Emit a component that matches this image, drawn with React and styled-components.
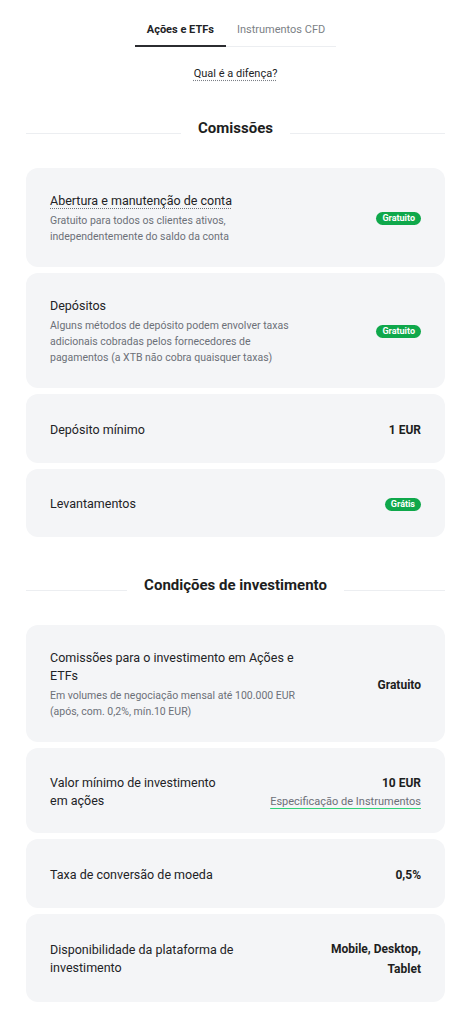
import React from "react";
import styled, { createGlobalStyle } from "styled-components";

const Global = createGlobalStyle`
  html, body { margin: 0; padding: 0; background: #ffffff; }
  body { font-family: Roboto, "Noto Sans", "Liberation Sans", sans-serif; color: #222326; -webkit-font-smoothing: antialiased; }
  * { box-sizing: border-box; }
`;

const Page = styled.div`
  padding: 14px 20px 20px 26px;
  display: flex;
  flex-direction: column;
  align-items: stretch;
`;

const Tabs = styled.div`
  display: flex;
  justify-content: center;
`;

const Tab = styled.div`
  padding: 9px ${(p) => (p.$active ? "12px" : "11px")} 8px;
  font-size: 11px;
  line-height: 14px;
  font-weight: ${(p) => (p.$active ? 700 : 400)};
  color: ${(p) => (p.$active ? "#222326" : "#7b7f86")};
  border-bottom: ${(p) => (p.$active ? "2px solid #2b2c30" : "1px solid #eceef1")};
  padding-bottom: ${(p) => (p.$active ? "8px" : "9px")};
  align-self: flex-end;
`;

const Diff = styled.div`
  margin-top: 20px;
  text-align: center;
  font-size: 11px;
  line-height: 14px;
  color: #222326;
`;

const Dotted = styled.span`
  text-decoration: underline dotted #7b7f86;
  text-underline-offset: 3px;
`;

const SectionTitle = styled.div`
  display: flex;
  align-items: center;
  gap: 17px;
  margin-top: ${(p) => p.$top}px;
  margin-bottom: 31px;
  font-size: 15px;
  line-height: 18px;
  font-weight: 700;
  color: #1d1e21;
  white-space: nowrap;
  &::before, &::after {
    content: "";
    flex: 1;
    height: 1px;
    background: #eceef1;
    margin-top: 10px;
  }
`;

const List = styled.div`
  display: flex;
  flex-direction: column;
  gap: 6px;
`;

const Card = styled.div`
  background: #f4f5f7;
  border-radius: 12px;
  padding: 24px 24px 22px;
  min-height: ${(p) => p.$min || 0}px;
  display: flex;
  align-items: center;
  justify-content: space-between;
  gap: 24px;
`;

const Left = styled.div`
  max-width: ${(p) => p.$max || 255}px;
  display: flex;
  flex-direction: column;
`;

const Title = styled.div`
  font-size: 12.5px;
  line-height: 18px;
  color: #222326;
`;

const DottedTitle = styled.span`
  text-decoration: underline dotted #6f737a;
  text-underline-offset: 3px;
  text-decoration-thickness: 1px;
`;

const Sub = styled.div`
  margin-top: 3px;
  font-size: 10.5px;
  line-height: 16px;
  color: #6c7077;
`;

const Right = styled.div`
  display: flex;
  flex-direction: column;
  align-items: flex-end;
  text-align: right;
  flex-shrink: 0;
  max-width: ${(p) => p.$max || 200}px;
`;

const Value = styled.div`
  font-size: 12px;
  line-height: 20px;
  font-weight: 700;
  color: #1d1e21;
`;

const Badge = styled.span`
  display: inline-block;
  background: #0fa84b;
  color: #ffffff;
  font-size: 9px;
  font-weight: 700;
  line-height: 13px;
  padding: 0 6px;
  border-radius: 7px;
`;

const Link = styled.span`
  font-size: 11px;
  line-height: 17px;
  color: #6c7077;
  text-decoration: underline solid #2fd27a;
  text-underline-offset: 3px;
  white-space: nowrap;
`;

export default function App() {
  return (
    <>
      <Global />
      <Page>
        <Tabs>
          <Tab $active>Ações e ETFs</Tab>
          <Tab>Instrumentos CFD</Tab>
        </Tabs>
        <Diff>
          <Dotted>Qual é a difença?</Dotted>
        </Diff>

        <SectionTitle $top={38}>Comissões</SectionTitle>
        <List>
          <Card>
            <Left>
              <Title>
                <DottedTitle>Abertura e manutenção de conta</DottedTitle>
              </Title>
              <Sub>Gratuito para todos os clientes ativos, independentemente do saldo da conta</Sub>
            </Left>
            <Right>
              <Badge>Gratuito</Badge>
            </Right>
          </Card>
          <Card>
            <Left>
              <Title>Depósitos</Title>
              <Sub>
                Alguns métodos de depósito podem envolver taxas adicionais cobradas pelos fornecedores de
                pagamentos (a XTB não cobra quaisquer taxas)
              </Sub>
            </Left>
            <Right>
              <Badge>Gratuito</Badge>
            </Right>
          </Card>
          <Card $min={69}>
            <Left>
              <Title>Depósito mínimo</Title>
            </Left>
            <Right>
              <Value>1 EUR</Value>
            </Right>
          </Card>
          <Card $min={68}>
            <Left>
              <Title>Levantamentos</Title>
            </Left>
            <Right>
              <Badge>Grátis</Badge>
            </Right>
          </Card>
        </List>

        <SectionTitle $top={39}>Condições de investimento</SectionTitle>
        <List>
          <Card>
            <Left>
              <Title>Comissões para o investimento em Ações e ETFs</Title>
              <Sub>Em volumes de negociação mensal até 100.000 EUR (após, com. 0,2%, mín.10 EUR)</Sub>
            </Left>
            <Right>
              <Value>Gratuito</Value>
            </Right>
          </Card>
          <Card $min={85}>
            <Left $max={175}>
              <Title>Valor mínimo de investimento em ações</Title>
            </Left>
            <Right>
              <Value>10 EUR</Value>
              <Link>Especificação de Instrumentos</Link>
            </Right>
          </Card>
          <Card $min={69}>
            <Left>
              <Title>Taxa de conversão de moeda</Title>
            </Left>
            <Right>
              <Value>0,5%</Value>
            </Right>
          </Card>
          <Card $min={88}>
            <Left $max={200}>
              <Title>Disponibilidade da plataforma de investimento</Title>
            </Left>
            <Right $max={100}>
              <Value>Mobile, Desktop, Tablet</Value>
            </Right>
          </Card>
        </List>
      </Page>
    </>
  );
}
